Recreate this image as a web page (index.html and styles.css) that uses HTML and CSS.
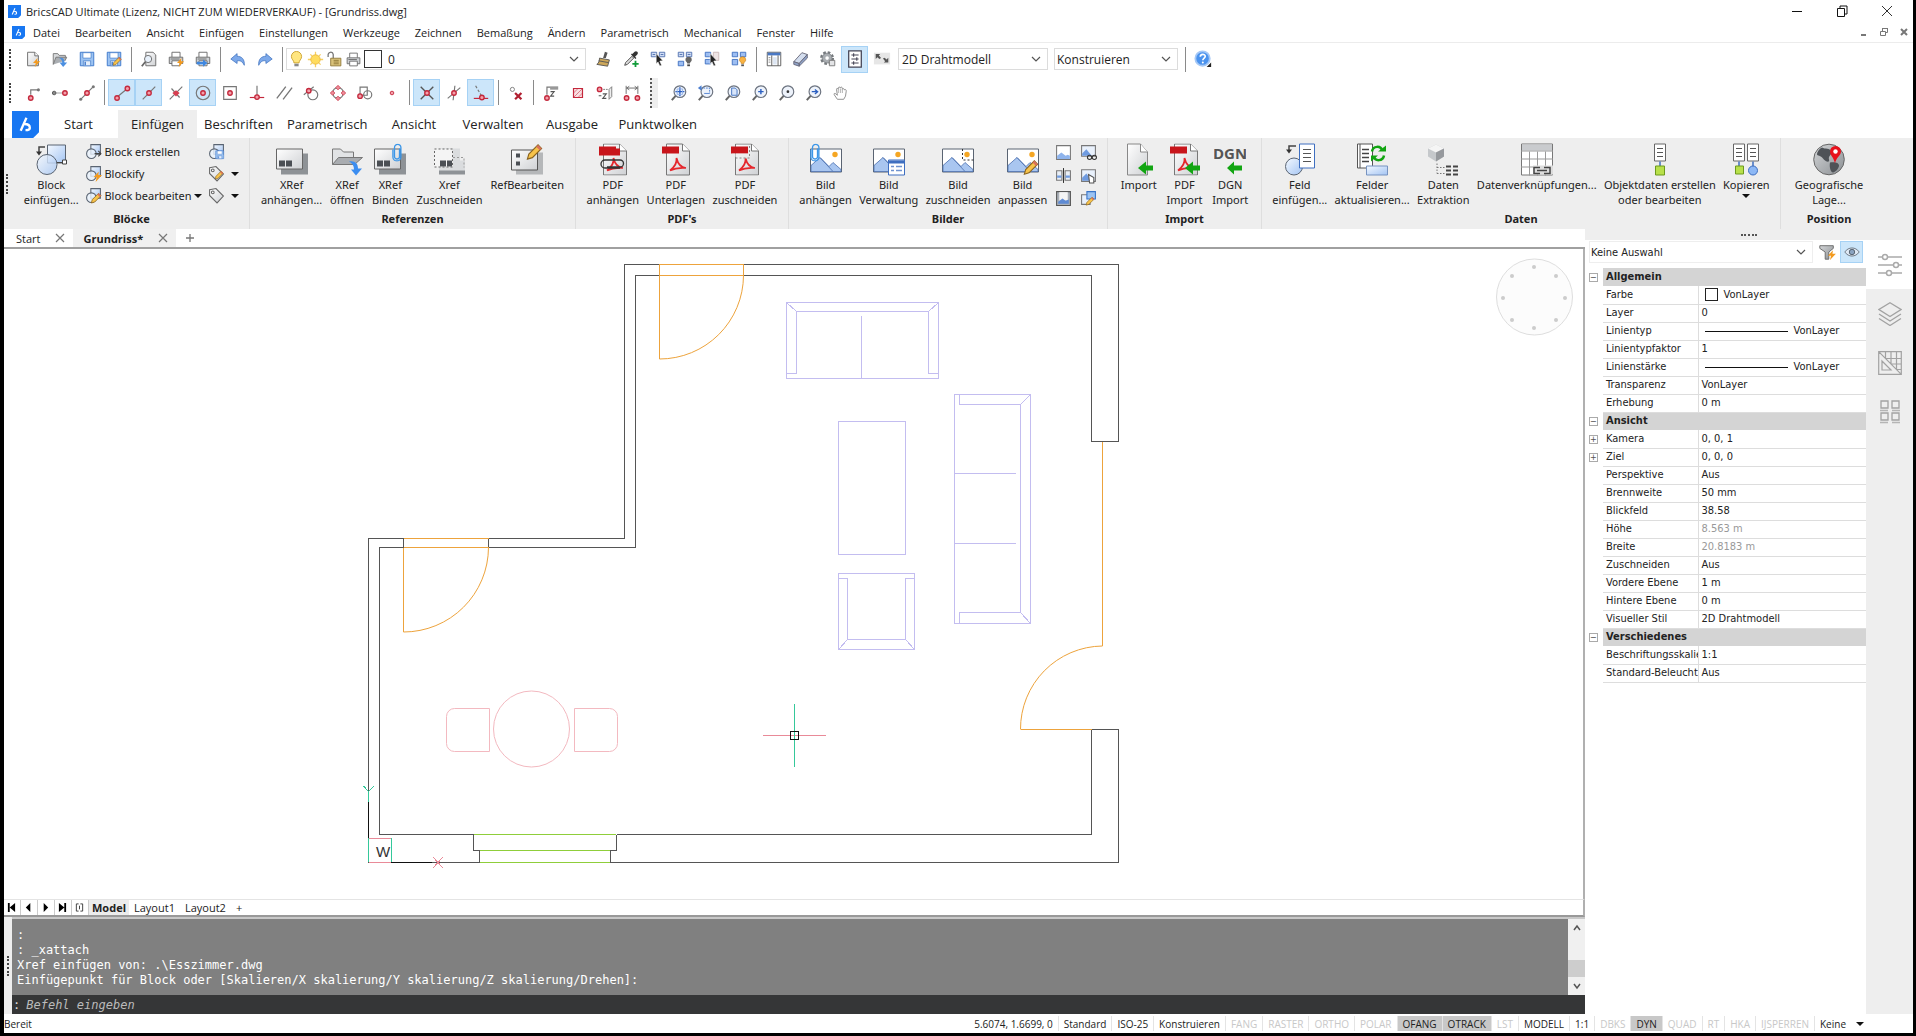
FILE: index.html
```html
<!DOCTYPE html>
<html lang="de">
<head>
  <meta charset="UTF-8" />
  <meta name="viewport" content="width=device-width, initial-scale=1.0"/>
  <title>BricsCAD Ultimate - [Grundriss.dwg]</title>
  <link rel="stylesheet" href="styles.css">
</head>
<body>

  <!-- Icons -->
  <svg class="sprite" aria-hidden="true">
    <defs>
      <linearGradient id="gBlue" x1="0" y1="0" x2="1" y2="1"><stop offset="0" stop-color="#f4f9ff"/><stop offset="1" stop-color="#a3c4f3"/></linearGradient>
      <linearGradient id="gGrey" x1="0" y1="0" x2="1" y2="1"><stop offset="0" stop-color="#ffffff"/><stop offset="1" stop-color="#cfd1d4"/></linearGradient>
      <linearGradient id="gDark" x1="0" y1="0" x2="1" y2="1"><stop offset="0" stop-color="#d4d6d8"/><stop offset="1" stop-color="#8b8f93"/></linearGradient>
    </defs>

    <symbol id="logo" viewBox="0 0 28 28"><path d="M0 0h28v22l-6 6H0z" fill="#1877f2"/><path d="M15 7L9 20.500M13 13.500c3.500 0 5.500 1.500 5.500 4 0 1.500-1.500 2.300-4.500 2.300" fill="none" stroke="#fff" stroke-width="2.400"/></symbol>
    <symbol id="pin" viewBox="0 0 20 20"><circle cx="10" cy="10" r="2.500" fill="#f3a0ab" stroke="#c4283c" stroke-width="1.500"/></symbol>
    <symbol id="pencil" viewBox="0 0 12 12"><path d="M1 11l1-3.500L8.500 1 11 3.500 4.500 10z" fill="#f7c34a" stroke="#8a6420" stroke-width=".8"/><path d="M8.500 1L11 3.500 9.700 4.800 7.200 2.300z" fill="#d9705c"/></symbol>
    <symbol id="clip" viewBox="0 0 10 18"><path d="M7.500 5v8a2.500 2.500 0 0 1-5 0V4a3.200 3.200 0 0 1 6.400 0v9.500a4 4 0 0 1-8 0V6" fill="none" stroke="#3b96e8" stroke-width="1.300"/></symbol>
    <symbol id="bolt" viewBox="0 0 8 10"><path d="M5 0L0 5.500h3L2 10l6-6.500H4.500z" fill="#f39a1e"/></symbol>

    <symbol id="new" viewBox="0 0 20 20"><path d="M4 2.500h8l4 4v11H4z" fill="url(#gGrey)" stroke="#666"/><path d="M12 2.500v4h4" fill="#fff" stroke="#666"/><use href="#bolt" x="10" y="9" width="8" height="10"/></symbol>
    <symbol id="open" viewBox="0 0 20 20"><path d="M2.500 16V4h5l1.500 2h7v3" fill="#d7d9db" stroke="#777"/><path d="M2.500 16l3-8h12l-2 4" fill="#aaaeb2" stroke="#777"/><path d="M9 9c4-1 6 1 6 5h3l-4.500 5-4-5h3c0-2-1-4-3.500-5z" fill="#4c8fe0"/></symbol>
    <symbol id="save" viewBox="0 0 20 20"><path d="M2.500 2.500h15v15h-15z" fill="#9cc3f2" stroke="#3874c8"/><path d="M5.500 3h9v6h-9z" fill="#fff" stroke="#3874c8" stroke-width=".7"/><path d="M6 12h8v5.500H6z" fill="#e6effb" stroke="#3874c8" stroke-width=".7"/><path d="M8 13v4" stroke="#3874c8" stroke-width="1.500"/></symbol>
    <symbol id="saveas" viewBox="0 0 20 20"><use href="#save"/><use href="#pencil" x="8" y="7" width="11" height="11"/></symbol>
    <symbol id="preview" viewBox="0 0 20 20"><path d="M6.500 2.500h8l3 3v12h-11z" fill="url(#gGrey)" stroke="#666"/><circle cx="9" cy="10" r="4" fill="#e8f1fb" stroke="#666"/><path d="M6 13l-4 5" stroke="#666" stroke-width="2"/></symbol>
    <symbol id="print" viewBox="0 0 20 20"><path d="M5.500 8V2.500h9V8" fill="#fff" stroke="#666"/><path d="M2.500 8h15v7h-15z" fill="#d0d3d6" stroke="#666"/><path d="M5.500 12h9v5.500h-9z" fill="#fff" stroke="#666"/><path d="M4 10h10" stroke="#666"/></symbol>
    <symbol id="printbolt" viewBox="0 0 20 20"><use href="#print"/><use href="#bolt" x="11" y="9" width="8" height="10"/></symbol>
    <symbol id="printgo" viewBox="0 0 20 20"><use href="#print"/><path d="M3 13h7v-2.500l5 4-5 4V16H3z" fill="#3f87e0"/></symbol>
    <symbol id="undo" viewBox="0 0 20 20"><path d="M9 4L2 10l7 5v-3c4-.5 6 1 8 5 .5-7-3-10-8-10z" fill="#7da9ea" stroke="#3c6fbd" stroke-width=".8"/></symbol>
    <symbol id="redo" viewBox="0 0 20 20"><path d="M11 4l7 6-7 5v-3c-4-.5-6 1-8 5-.5-7 3-10 8-10z" fill="#7da9ea" stroke="#3c6fbd" stroke-width=".8"/></symbol>
    <symbol id="bulb" viewBox="0 0 20 20"><path d="M7 14c0-3-3-4-3-7.500a6 6 0 0 1 12 0c0 3.500-3 4.500-3 7.500z" fill="#ffe680" stroke="#c79b22"/><path d="M7.500 15h5v3h-5z" fill="#888"/></symbol>
    <symbol id="sun" viewBox="0 0 20 20"><path d="M10 1v18M1 10h18M4 4l12 12M16 4L4 16" stroke="#f6cf62" stroke-width="1.500"/><circle cx="10" cy="10" r="5.500" fill="#ffdc5e" stroke="#eab73a"/></symbol>
    <symbol id="lock" viewBox="0 0 20 20"><path d="M2.500 7V5a3 3 0 0 1 6-1v5" fill="none" stroke="#777" stroke-width="1.500"/><path d="M5.500 8.500h12v9h-12z" fill="#d9c27a" stroke="#8c7434"/><path d="M9 11h6M9 13h6M9 15h6" stroke="#8c7434"/></symbol>
    <symbol id="brush" viewBox="0 0 20 20"><path d="M11 2l3 1-2 6h-3z" fill="#555"/><path d="M5 9l11 2-2 7-12-2c2-1 3-4 3-7z" fill="#cda75a" stroke="#555"/><path d="M4 12l11 2" stroke="#555"/></symbol>
    <symbol id="picker" viewBox="0 0 20 20"><path d="M3 17l1-3 7-7 2 2-7 7z" fill="#ddd" stroke="#444"/><path d="M10 5l5 5 1-1-1.500-1.500L17 5a2 2 0 0 0-3-3l-2.500 2.500L11 4z" fill="#333"/><path d="M15 12v7M11.500 15.500h7" stroke="#129c3a" stroke-width="2"/></symbol>
    <symbol id="cells" viewBox="0 0 20 20"><path d="M2.500 2.500h6v5h-6zM11.500 2.500h6v5h-6z" fill="#cfdcf5" stroke="#4f6fae"/><path d="M4 5h3M13 5h3" stroke="#4f6fae"/></symbol>
    <symbol id="arrow" viewBox="0 0 20 20"><path d="M8 4l7.500 8-3.500.3 2 4.700-2 .8-2-4.600-2 2.300z" fill="#222" stroke="#fff" stroke-width=".6"/></symbol>
    <symbol id="laysel" viewBox="0 0 20 20"><use href="#cells"/><use href="#arrow"/></symbol>
    <symbol id="layoff" viewBox="0 0 20 20"><use href="#cells"/><path d="M2.500 12.500h6v5h-6z" fill="#9dbef2" stroke="#3f6fc0"/><path d="M12.500 15c0-2-2-2-2-4a3.500 3.500 0 0 1 7 0c0 2-2 2-2 4z" fill="#666"/><path d="M12.500 16h3v2h-3z" fill="#444"/></symbol>
    <symbol id="layiso" viewBox="0 0 20 20"><path d="M2.500 2.500h6v5h-6zM2.500 10.500h6v5h-6z" fill="#9dbef2" stroke="#3f6fc0"/><path d="M11.500 2.500h6v9h-6z" fill="#eee4e4" stroke="#c9b5b5"/><use href="#arrow"/></symbol>
    <symbol id="layon" viewBox="0 0 20 20"><path d="M2.500 2.500h6v5h-6zM11.500 2.500h6v5h-6zM2.500 10.500h6v6h-6z" fill="#9dbef2" stroke="#3f6fc0"/><path d="M12.500 15c0-2-2-2-2-4a3.500 3.500 0 0 1 7 0c0 2-2 2-2 4z" fill="#f9b343" stroke="#b9771a" stroke-width=".6"/><path d="M12.500 16h3v2h-3z" fill="#555"/></symbol>
    <symbol id="explorer" viewBox="0 0 20 20"><path d="M2.500 2.500h15v15h-15z" fill="#fff" stroke="#555"/><path d="M3 3h14v3H3z" fill="#4a78c4"/><path d="M7.500 6v11.500M14.500 6v11.500" stroke="#555"/><path d="M9 8h4v8H9z" fill="#dde6f3"/><path d="M4 8.500h2M4 11h2M4 13.500h2" stroke="#888"/></symbol>
    <symbol id="eraser" viewBox="0 0 20 20"><path d="M2 13l9-10 6 2-9 10z" fill="#d3ddee" stroke="#667"/><path d="M2 13l6 2v3l-6-2zM8 15l9-10v4L8 18z" fill="#8fa3c8" stroke="#667"/></symbol>
    <symbol id="gear" viewBox="0 0 20 20"><circle cx="9" cy="9" r="6" fill="none" stroke="#75797d" stroke-width="3.500" stroke-dasharray="2.700 2"/><circle cx="9" cy="9" r="5.500" fill="#a9adb1" stroke="#75797d" stroke-width=".8"/><circle cx="9" cy="9" r="2" fill="#fff"/><path d="M11.500 11.500h6v6h-6z" fill="#e3e4e6" stroke="#777"/></symbol>
    <symbol id="sliders" viewBox="0 0 20 20"><path d="M3 1h14v18H3z" fill="#fff" stroke="#445" stroke-width="1.400"/><path d="M6 5.500h8M6 10h8M6 14.500h8M8.500 3.500v4M12 8v4M8.500 12.500v4" stroke="#445" stroke-width="1.200"/></symbol>
    <symbol id="viewdots" viewBox="0 0 20 20"><path d="M1 3h18v13H1z" fill="#e6e6e6"/><path d="M3 10V4.500h5L6.500 6 9 9 7 10 5 8zM17 8.500V14h-5l1.500-1.500-2.500-3L13 8.500l2 2z" fill="#555"/></symbol>
    <symbol id="help" viewBox="0 0 20 20"><circle cx="9.500" cy="9.500" r="8" fill="#4b93ee" stroke="#a5c8f6" stroke-width="2"/><path d="M7 7.500c0-3.500 5.500-3.500 5.500-.5 0 2-2.700 2-2.700 4.500" fill="none" stroke="#fff" stroke-width="1.800"/><circle cx="9.800" cy="14" r="1.100" fill="#fff"/><path d="M19 14v5h-5z" fill="#222"/></symbol>

    <!-- Objektfang -->
    <symbol id="s-from" viewBox="0 0 20 20"><path d="M7.500 12V6.500H16" fill="none" stroke="#777" stroke-width="1.300"/><use href="#pin" x="-2.500" y="5.500" width="20" height="20"/><circle cx="16" cy="6.500" r="1.700" fill="#777"/></symbol>
    <symbol id="s-mid2" viewBox="0 0 20 20"><path d="M4 10h12" stroke="#999"/><circle cx="3.500" cy="10" r="2" fill="#888" stroke="#555"/><use href="#pin" x="5.500"/></symbol>
    <symbol id="s-bet" viewBox="0 0 20 20"><path d="M3 17L17 3" stroke="#777" stroke-width="1.300"/><use href="#pin"/><circle cx="3" cy="17" r="1.700" fill="#777"/><circle cx="17" cy="3" r="1.700" fill="#777"/></symbol>
    <symbol id="s-end" viewBox="0 0 20 20"><path d="M4 15L16 5" stroke="#777" stroke-width="1.300"/><use href="#pin" x="-5.500" y="5.500"/><use href="#pin" x="6" y="-5"/></symbol>
    <symbol id="s-mid" viewBox="0 0 20 20"><path d="M3 17L17 3" stroke="#777" stroke-width="1.300"/><use href="#pin"/></symbol>
    <symbol id="s-near" viewBox="0 0 20 20"><path d="M3 17L17 3M5 5l9 10" stroke="#777" stroke-width="1.300"/><path d="M6 10l4-3 4 3-4 4z" fill="#d63e50"/></symbol>
    <symbol id="s-cen" viewBox="0 0 20 20"><circle cx="10" cy="10" r="7.500" fill="none" stroke="#777" stroke-width="1.300"/><use href="#pin"/></symbol>
    <symbol id="s-geo" viewBox="0 0 20 20"><path d="M3 3h14v14H3z" fill="none" stroke="#777" stroke-width="1.300"/><use href="#pin"/></symbol>
    <symbol id="s-perp" viewBox="0 0 20 20"><path d="M10 2v11" stroke="#777" stroke-width="1.300"/><path d="M2 15h16" stroke="#c4283c" stroke-width="1.300"/><use href="#pin" y="4.500"/></symbol>
    <symbol id="s-par" viewBox="0 0 20 20"><path d="M2 16L12 3M9 17L19 4" stroke="#777" stroke-width="1.500"/></symbol>
    <symbol id="s-tan" viewBox="0 0 20 20"><circle cx="12" cy="12" r="5.500" fill="none" stroke="#777" stroke-width="1.300"/><path d="M2 12L13 3" stroke="#777" stroke-width="1.300"/><use href="#pin" x="-2.500" y="-2.500"/></symbol>
    <symbol id="s-quad" viewBox="0 0 20 20"><circle cx="10" cy="10" r="6" fill="none" stroke="#777" stroke-width="1.300"/><path d="M10 1.500l2.500 2.500L10 6.500 7.500 4zM10 13.500l2.500 2.500-2.500 2.500L7.500 16zM4 7.500L6.500 10 4 12.500 1.500 10zM16 7.500l2.500 2.500-2.500 2.500-2.500-2.500z" fill="#ef8c99" stroke="#c4283c" stroke-width=".8"/></symbol>
    <symbol id="s-ins" viewBox="0 0 20 20"><path d="M4.500 3.500h8v9h-8z" fill="none" stroke="#777" stroke-width="1.300"/><circle cx="13" cy="12" r="4.500" fill="none" stroke="#777" stroke-width="1.300"/><use href="#pin" x="-5.500" y="3.500"/></symbol>
    <symbol id="s-node" viewBox="0 0 20 20"><circle cx="10" cy="10" r="2" fill="#f3a0ab" stroke="#c4283c"/></symbol>
    <symbol id="s-int" viewBox="0 0 20 20"><path d="M3 3l14 14M17 3L3 17" stroke="#555" stroke-width="1.500"/><use href="#pin"/></symbol>
    <symbol id="s-app" viewBox="0 0 20 20"><path d="M3 16L17 4M11 2L9 18" stroke="#777" stroke-width="1.300"/><use href="#pin"/></symbol>
    <symbol id="s-ext" viewBox="0 0 20 20"><path d="M4 2l7 12" stroke="#777" stroke-width="1.300" stroke-dasharray="3 2"/><path d="M2 16h16" stroke="#c4283c" stroke-width="1.300"/><use href="#pin" x="1" y="5"/></symbol>
    <symbol id="s-none" viewBox="0 0 20 20"><circle cx="6" cy="6" r="2.300" fill="none" stroke="#777"/><path d="M9 10l7 7M16 10l-7 7" stroke="#b01e30" stroke-width="2.500"/></symbol>
    <symbol id="s-z" viewBox="0 0 20 20"><path d="M5.500 12V3.500H18M9 5.500h9" fill="none" stroke="#777" stroke-width="1.300"/><path d="M9.500 8.500h4l-4 5h4" fill="none" stroke="#555" stroke-width="1.200"/><use href="#pin" x="-4.500" y="5.500"/></symbol>
    <symbol id="s-hatch" viewBox="0 0 20 20"><path d="M5 5h10v10H5z" fill="#f9dfe2" stroke="#c4283c" stroke-width="1.300"/><path d="M5 10l5-5M5 15L15 5M10 15l5-5" stroke="#c4283c" stroke-width=".6"/></symbol>
    <symbol id="s-negz" viewBox="0 0 20 20"><use href="#pin" x="-6" y="-4"/><path d="M8 6h5" stroke="#777" stroke-dasharray="2 1"/><path d="M14.500 6l3-3v11l-3 3z" fill="#eee" stroke="#777"/><path d="M3 13h3M7.500 11h4l-4 5h4" fill="none" stroke="#555" stroke-width="1.200"/></symbol>
    <symbol id="s-dist" viewBox="0 0 20 20"><path d="M3.500 2v9M16.500 2v9M4 4.500h12M7 2.500l-3 2 3 2M13 2.500l3 2-3 2" fill="none" stroke="#666"/><use href="#pin" x="-6" y="5.500"/><use href="#pin" x="6" y="5.500"/></symbol>
    <symbol id="lens" viewBox="0 0 20 20"><path d="M2 18l4.500-5" stroke="#666" stroke-width="2.200"/><circle cx="11" cy="8.500" r="6.500" fill="#eef3fb" stroke="#6d7480" stroke-width="1.300"/></symbol>
    <symbol id="z-ext" viewBox="0 0 20 20"><use href="#lens"/><path d="M11 3.500v10M6 8.500h10" stroke="#2c5fc0" stroke-width="1.500"/><path d="M8 5.500h6v6H8z" fill="none" stroke="#8fb0ea"/></symbol>
    <symbol id="z-prev" viewBox="0 0 20 20"><use href="#lens"/><path d="M4 4.500h10v6" fill="none" stroke="#4c7fd0" stroke-dasharray="2 1"/><path d="M14 10.500H8" fill="none" stroke="#4c7fd0"/><path d="M1 4.500L5 1.500v6z" fill="#4c7fd0"/></symbol>
    <symbol id="z-page" viewBox="0 0 20 20"><use href="#lens"/><path d="M8.500 4.500h4l2 2v6h-6z" fill="#d8e5fa" stroke="#3f6fc0"/></symbol>
    <symbol id="z-in" viewBox="0 0 20 20"><use href="#lens"/><path d="M11 5.500v6M8 8.500h6" stroke="#2c5fc0" stroke-width="1.600"/></symbol>
    <symbol id="z-dot" viewBox="0 0 20 20"><use href="#lens"/><circle cx="11" cy="8.500" r="1.500" fill="#333"/></symbol>
    <symbol id="z-right" viewBox="0 0 20 20"><use href="#lens"/><path d="M7.500 8.500h6M11 6l3 2.500-3 2.500" fill="none" stroke="#2c5fc0" stroke-width="1.500"/></symbol>
    <symbol id="hand" viewBox="0 0 20 20"><path d="M6 17l-3.500-5c-.8-1.500.7-2.200 1.800-1L6 12.500 5 6c0-1.500 1.500-1.500 2 0V4.500c.3-1.500 2-1.500 2.200 0 .3-1.400 2-1.400 2.300 0V6c.5-1.300 2.300-1 2.300.5 1-.8 2.200-.2 2 1.500l-.8 5.500-2 3.500z" fill="#fff" stroke="#888"/><path d="M7 6v4M9.300 5v5M11.500 6v4" stroke="#aaa"/></symbol>

    <!-- Multifunktionsleiste -->
    <symbol id="r-insert" viewBox="0 0 32 32"><path d="M12.500 1.500h18v18h-18z" fill="url(#gBlue)" stroke="#5a6472"/><circle cx="12" cy="21" r="10" fill="url(#gBlue)" stroke="#5a6472" fill-opacity=".8"/><path d="M10 3.500H4V9" fill="none" stroke="#444" stroke-width="1.500"/><path d="M1 8h6l-3 4z" fill="#333"/><path d="M27.500 16.500h4v4h-4z" fill="#fff" stroke="#444"/><path d="M22 19h5" stroke="#444"/></symbol>
    <symbol id="r-blk" viewBox="0 0 16 16"><path d="M5.500 1.500h9v9h-9z" fill="url(#gBlue)" stroke="#5a6472"/><circle cx="6" cy="10" r="4.500" fill="#eaf2fd" fill-opacity=".8" stroke="#5a6472"/></symbol>
    <symbol id="r-create" viewBox="0 0 16 16"><use href="#r-blk"/><path d="M9 10h6M12.500 7.500L15 10l-2.500 2.500" fill="none" stroke="#444"/></symbol>
    <symbol id="r-blockify" viewBox="0 0 16 16"><use href="#r-blk"/><use href="#bolt" x="8" y="6" width="8" height="10"/></symbol>
    <symbol id="r-edit" viewBox="0 0 16 16"><use href="#r-blk"/><use href="#pencil" x="5" y="5" width="11" height="11"/></symbol>
    <symbol id="r-blksave" viewBox="0 0 16 16"><use href="#r-blk"/><use href="#save" x="6" y="6" width="10" height="10"/></symbol>
    <symbol id="r-tag" viewBox="0 0 16 16"><path d="M1.500 2.500l6-1 7 7-6 6.500-7-7z" fill="url(#gGrey)" stroke="#666"/><circle cx="4.500" cy="5" r="1.300" fill="#fff" stroke="#666"/></symbol>
    <symbol id="r-tagedit" viewBox="0 0 16 16"><use href="#r-tag"/><use href="#pencil" x="6" y="5" width="9" height="9"/></symbol>
    <symbol id="r-sheet" viewBox="0 0 32 32"><path d="M5 10h27v21H5z" fill="#8e9296"/><path d="M.5 5.500h26v20H.5z" fill="url(#gGrey)" stroke="#666"/><path d="M3 17h6v6H3zM10 17h6v6h-6z" fill="#4b4f54"/></symbol>
    <symbol id="r-xopen" viewBox="0 0 32 32"><path d="M1.500 21V5.500h8l3 3h10V15" fill="#e1e3e5" stroke="#777"/><path d="M1.500 21l6-7h24l-8 7z" fill="#a9acb0" stroke="#777"/><path d="M18 18c6-1 9 2 9 7h4l-6 7-5-6h3c0-3-1-6-5-8z" fill="#3b8df0"/></symbol>
    <symbol id="r-xbind" viewBox="0 0 32 32"><use href="#r-sheet"/><use href="#clip" x="18" y="0" width="10" height="18"/></symbol>
    <symbol id="r-xclip" viewBox="0 0 32 32"><path d="M6 24h26v7H6z" fill="#8e9296"/><path d="M20 5h7v12h5v10H6V5z" fill="#dadcde" stroke="none"/><path d="M1.500 5.500h18v18h-18z" fill="#f4f4f4" stroke="#666" stroke-dasharray="2 2"/><path d="M20 14h11v10" fill="none" stroke="#999" stroke-dasharray="2 2"/><path d="M7 17h6v6H7zM14 17h5v6h-5z" fill="#4b4f54"/></symbol>
    <symbol id="r-refedit" viewBox="0 0 32 32"><path d="M5 9h27v22H5z" fill="#b5b7b9"/><path d="M.5 6.500h26v20H.5z" fill="url(#gGrey)" stroke="#555"/><path d="M5 10h4v4H5zM5 18h4v4H5z" fill="#4b4f54"/><use href="#pencil" x="15" y="0" width="17" height="17"/></symbol>
    <symbol id="r-pdf" viewBox="0 0 32 32"><path d="M6.500.5h16l7 7v24h-23z" fill="url(#gGrey)" stroke="#777"/><path d="M22.500.5v7h7" fill="#fff" stroke="#777"/><path d="M2 3h17v7H2z" fill="#c8151b"/><path d="M10 27c4-3 7-8 6.500-12.500C18 21 21 24 26 24.500c-6-.5-11 0-16 2.500z" fill="none" stroke="#e5262c" stroke-width="1.700"/></symbol>
    <symbol id="r-pdfattach" viewBox="0 0 32 32"><use href="#r-pdf"/><path d="M2 5h21v7H2z" fill="#c8151b"/><path d="M23 24.500H8a4 4 0 0 1 0-8h15a3.500 3.500 0 0 1 0 7H10" fill="none" stroke="#333" stroke-width="1.300"/></symbol>
    <symbol id="r-pdfclip" viewBox="0 0 32 32"><use href="#r-pdf"/><path d="M3 10h17v5H8z" fill="#eee" opacity=".6"/><path d="M6.500 14.500h14v-14" fill="none" stroke="#888" stroke-dasharray="2 2"/></symbol>
    <symbol id="r-img" viewBox="0 0 32 32"><path d="M.5 5.500h31v23H.5z" fill="#fff" stroke="#5a6472"/><path d="M1 22l9-8 9 9 4-4 8 7v2H1z" fill="#a9c6f0" stroke="#4a6fae" stroke-width=".8"/><path d="M10 14l13 14" stroke="#4a6fae" stroke-width=".8"/><circle cx="25" cy="11" r="2.700" fill="#f5a623"/></symbol>
    <symbol id="r-imgattach" viewBox="0 0 32 32"><use href="#r-img"/><use href="#clip" x="0" y="0" width="10" height="18"/></symbol>
    <symbol id="r-imgman" viewBox="0 0 32 32"><use href="#r-img"/><path d="M15.500 16.500h16v15h-16z" fill="#fff" stroke="#3f6fc0"/><path d="M16 17h15v3H16z" fill="#3f6fc0"/><path d="M18 23h3M23 23h6M18 27h3M23 27h6" stroke="#6f93d0" stroke-width="1.500"/></symbol>
    <symbol id="r-imgclip" viewBox="0 0 32 32"><use href="#r-img"/><path d="M20.500 5.500v11h11" fill="none" stroke="#333" stroke-dasharray="2 2"/></symbol>
    <symbol id="r-imgedit" viewBox="0 0 32 32"><use href="#r-img"/><use href="#pencil" x="16" y="16" width="16" height="16"/></symbol>
    <symbol id="r-i1" viewBox="0 0 16 16"><path d="M1.500 1.500h13v13h-13z" fill="#fff" stroke="#777"/><path d="M2 11l4-3 4 3 2-1 2 1v3H2z" fill="#8fb4ec"/></symbol>
    <symbol id="r-i2" viewBox="0 0 16 16"><path d="M1.500 1.500h13v10h-13z" fill="#e9f1fc" stroke="#777"/><path d="M2 9l4-4 5 6H2z" fill="#6f9be0"/><circle cx="9" cy="12.500" r="2" fill="none" stroke="#333"/><circle cx="13.500" cy="12.500" r="2" fill="none" stroke="#333"/></symbol>
    <symbol id="r-i3" viewBox="0 0 16 16"><path d="M1.500 3.500h5v9h-5zM9.500 3.500h5v9h-5z" fill="#e9eef5" stroke="#777"/><path d="M8 1v14" stroke="#333"/><path d="M2 8h4v2H2zM10 8h4v2h-4z" fill="#6f9be0"/></symbol>
    <symbol id="r-i4" viewBox="0 0 16 16"><path d="M1.500 2.500h13v11h-13z" fill="#e9f1fc" stroke="#777"/><path d="M2 10l4-4 5 7H2z" fill="#6f9be0"/><path d="M8 7l5 3v5H9z" fill="#fff" stroke="#555"/></symbol>
    <symbol id="r-i5" viewBox="0 0 16 16"><path d="M1.500 1.500h13v13h-13z" fill="#aab0b8" stroke="#555"/><path d="M4 2h8v8H4z" fill="#f4f4f4"/><path d="M3 11l4-3 3 2 3-1v4H3z" fill="#5f8bd4"/></symbol>
    <symbol id="r-i6" viewBox="0 0 16 16"><path d="M1.500 4.500h8v9h-8z" fill="#e9f1fc" stroke="#777"/><path d="M6.500 1.500h8v7h-8z" fill="#9cc3f2" stroke="#3874c8"/><use href="#pencil" x="5" y="6" width="9" height="9"/></symbol>
    <symbol id="r-import" viewBox="0 0 32 32"><path d="M4.500.5h13l7 8v23h-20z" fill="url(#gGrey)" stroke="#888"/><path d="M17.500.5v8h7" fill="#fff" stroke="#888"/><path d="M30 22v5h-7v4l-8-6.500 8-6.500v4z" fill="#12a512"/></symbol>
    <symbol id="r-pdfimport" viewBox="0 0 32 32"><use href="#r-pdf"/><path d="M32 22v5h-7v4l-8-6.500 8-6.500v4z" fill="#12a512"/></symbol>
    <symbol id="r-field" viewBox="0 0 32 32"><circle cx="10" cy="23" r="8.500" fill="url(#gBlue)" stroke="#5a6472"/><path d="M15.500.5h15v24h-15z" fill="#fff" stroke="#3f6fc0"/><path d="M19 6h8M19 10h8M19 14h8M19 18h8" stroke="#555"/><path d="M12 2.500H5V7" fill="none" stroke="#444" stroke-width="1.500"/><path d="M2 6h6l-3 4z" fill="#333"/></symbol>
    <symbol id="r-fieldup" viewBox="0 0 32 32"><path d="M1.500.5h15v24h-15z" fill="#fff" stroke="#555"/><path d="M4 .5v24" stroke="#555"/><path d="M6 6h7M6 10h7M6 14h7M6 18h7" stroke="#444" stroke-width="1.600"/><path d="M16 8c1-6 9-6 10-1M28 12c-1 6-9 6-10 1" fill="none" stroke="#12a512" stroke-width="2.500"/><path d="M22 8h8V2zM22 12h-7v6z" fill="#12a512"/><path d="M10.500 22.500h21v9h-21z" fill="url(#gBlue)" stroke="#7793c0"/></symbol>
    <symbol id="r-extract" viewBox="0 0 32 32"><path d="M9 1l8 4v8l-8 5-8-5V5z" fill="#c5c8cb"/><path d="M1 5l8-4 8 4-8 4z" fill="#f5f5f5"/><path d="M9 9l8-4v8l-8 5z" fill="#96999d"/><path d="M10 20v10M10 24h8M10 30h8" stroke="#777" stroke-dasharray="1.500 1.500"/><path d="M19 23h5M26 23h5M19 27h5M26 27h5M19 31h5M26 31h5" stroke="#444" stroke-width="2"/></symbol>
    <symbol id="r-links" viewBox="0 0 32 32"><path d="M.5.500h31v31H.5z" fill="#fff" stroke="#777"/><path d="M1 1h30v6H1z" fill="#c9cbce"/><path d="M0 7.500h32M0 15.500h32M0 23.500h32M8.500 8v24M16.500 8v24M24.500 8v24" stroke="#999"/><path d="M12 22h20v9H12z" fill="#ddd"/><path d="M19 24h-6v6h6M16 27h10M23 24h6v6h-6" fill="none" stroke="#444" stroke-width="1.500"/></symbol>
    <symbol id="r-objdata" viewBox="0 0 32 32"><path d="M10.500.5h11v17h-11z" fill="#fff" stroke="#666"/><path d="M13 5h6M13 9h6M13 13h6" stroke="#555"/><path d="M16 18v5" stroke="#3f6fc0" stroke-width="1.500"/><path d="M11.500 22.500h9v9h-9z" fill="#b8e04a" stroke="#6d9a1c"/></symbol>
    <symbol id="r-copy" viewBox="0 0 32 32"><path d="M3.500.5h11v17h-11zM17.500.5h11v17h-11z" fill="#fff" stroke="#666"/><path d="M6 5h6M6 9h6M6 13h6M20 5h6M20 9h6M20 13h6" stroke="#555"/><path d="M9 18v5M23 18v5" stroke="#3f6fc0" stroke-width="1.500"/><path d="M5.500 22.500h8v8h-8z" fill="#b8e04a" stroke="#6d9a1c"/><circle cx="23" cy="27" r="4.500" fill="#8db8f5" stroke="#3f6fc0"/></symbol>
    <symbol id="r-geo" viewBox="0 0 32 32"><circle cx="16" cy="16" r="15.300" fill="url(#gDark)" stroke="#666"/><path d="M9 4c3 2 8 0 9 4s-3 4-2 8-4 2-6-1-6-3-6-4 1-5 5-7zM17 19c4-1 9 0 9 3s-4 7-6 7-4-5-3-10z" fill="#4e5257"/><path d="M22 20c-1-6-5-8-5-12a5.500 5.500 0 0 1 11 0c0 4-5 6-6 12z" fill="#e8101c"/><circle cx="22.500" cy="8" r="2.200" fill="#fff"/></symbol>

    <symbol id="funnel" viewBox="0 0 20 20"><path d="M2 3h15v3l-5 4v8H8v-8L2 6z" fill="url(#gDark)" stroke="#666"/><use href="#bolt" x="11" y="8" width="9" height="11"/></symbol>
    <symbol id="eye" viewBox="0 0 20 20"><path d="M2 10c4-6 12-6 16 0-4 6-12 6-16 0z" fill="#dfe9f5" stroke="#66707c"/><circle cx="10" cy="10" r="3" fill="#8aa3c0" stroke="#4f5b68"/></symbol>
    <symbol id="p-props" viewBox="0 0 24 24"><path d="M0 4h24M0 12h24M0 20h24" stroke="#aaa" stroke-width="1.500"/><circle cx="7" cy="4" r="2.500" fill="#fff" stroke="#aaa" stroke-width="1.500"/><circle cx="18" cy="12" r="2.500" fill="#fff" stroke="#aaa" stroke-width="1.500"/><circle cx="11" cy="20" r="2.500" fill="#fff" stroke="#aaa" stroke-width="1.500"/></symbol>
    <symbol id="p-layers" viewBox="0 0 24 24"><path d="M12 .8L23 7.500l-11 7-11-7zM1 12l11 7 11-7M1 16.500l11 7 11-7" fill="none" stroke="#a2a2a2" stroke-width="1.300"/></symbol>
    <symbol id="p-hatch" viewBox="0 0 24 24"><path d="M.7.700h22.600v22.600H.7zM.7.700l22.600 22.600M4 10v9h9zM7.500 1v6.500H23M13 1v12h10M18.500 1v17.500H23" fill="none" stroke="#a2a2a2" stroke-width="1.200"/></symbol>
    <symbol id="p-blocks" viewBox="0 0 24 24"><path d="M3 1h7v7H3zM14 1h7v7h-7zM3 13h7v7H3zM14 13h7v7h-7z" fill="none" stroke="#a2a2a2" stroke-width="1.300"/><path d="M2 10.500h8M14 10.500h8M2 22.500h8M14 22.500h8" stroke="#b5b5b5" stroke-width="1.500"/></symbol>
    <symbol id="chev" viewBox="0 0 10 10"><path d="M1 3l4 4 4-4" fill="none" stroke="#555" stroke-width="1.200"/></symbol>
    <symbol id="x" viewBox="0 0 10 10"><path d="M1 1l8 8M9 1L1 9" fill="none" stroke="currentColor" stroke-width="1.200"/></symbol>
    <symbol id="plus" viewBox="0 0 10 10"><path d="M5 1v8M1 5h8" stroke="currentColor" stroke-width="1.300"/></symbol>
    <symbol id="caret" viewBox="0 0 8 8"><path d="M0 2h8L4 6z" fill="#111"/></symbol>
  </svg>

  <header class="titlebar">
    <svg class="app-icon"><use href="#logo"/></svg>
    <span>BricsCAD Ultimate (Lizenz, NICHT ZUM WIEDERVERKAUF) - [Grundriss.dwg]</span>
    <div class="window-buttons">
      <button aria-label="Minimieren"><svg viewBox="0 0 12 12"><path d="M1 6.500h10" stroke="#111"/></svg></button>
      <button aria-label="Wiederherstellen"><svg viewBox="0 0 12 12"><path d="M1.500 3.500h7v8h-7zM4 3V1h7v8H9" fill="none" stroke="#111"/></svg></button>
      <button aria-label="Schließen"><svg viewBox="0 0 12 12"><path d="M1 1l10 10M11 1L1 11" stroke="#333"/></svg></button>
    </div>
  </header>

  <nav class="menubar">
    <svg class="app-icon"><use href="#logo"/></svg>
    <button>Datei</button>
    <button>Bearbeiten</button>
    <button>Ansicht</button>
    <button>Einfügen</button>
    <button>Einstellungen</button>
    <button>Werkzeuge</button>
    <button>Zeichnen</button>
    <button>Bemaßung</button>
    <button>Ändern</button>
    <button>Parametrisch</button>
    <button>Mechanical</button>
    <button>Fenster</button>
    <button>Hilfe</button>
    <div class="mdi-buttons">
      <button aria-label="Zeichnung minimieren"><svg viewBox="0 0 10 10"><path d="M2 8h5" stroke="#777" stroke-width="2"/></svg></button>
      <button aria-label="Zeichnung wiederherstellen"><svg viewBox="0 0 10 10"><path d="M1.500 4.500h5v4h-5zM3.500 4V1.500h5v4H7M3 1.500h6" fill="none" stroke="#777"/></svg></button>
      <button aria-label="Zeichnung schließen"><svg viewBox="0 0 10 10"><path d="M2 2l6 6M8 2L2 8" stroke="#777" stroke-width="2"/></svg></button>
    </div>
  </nav>

  <div class="toolbar toolbar-main">
    <span class="grip"></span>
    <button aria-label="Neu"><svg><use href="#new"/></svg></button>
    <button aria-label="Öffnen"><svg><use href="#open"/></svg></button>
    <button aria-label="Speichern"><svg><use href="#save"/></svg></button>
    <button aria-label="Speichern unter"><svg><use href="#saveas"/></svg></button>
    <span class="sep"></span>
    <button aria-label="Vorschau"><svg><use href="#preview"/></svg></button>
    <button aria-label="Drucken"><svg><use href="#printbolt"/></svg></button>
    <button aria-label="Publizieren"><svg><use href="#printgo"/></svg></button>
    <span class="sep"></span>
    <button aria-label="Zurück"><svg><use href="#undo"/></svg></button>
    <button aria-label="Wiederholen"><svg><use href="#redo"/></svg></button>
    <span class="sep"></span>
    <div class="combo layer-combo">
      <svg><use href="#bulb"/></svg>
      <svg><use href="#sun"/></svg>
      <svg><use href="#lock"/></svg>
      <svg><use href="#print"/></svg>
      <span class="swatch"></span>
      <select aria-label="Layer"><option>0</option></select>
      <svg class="chev"><use href="#chev"/></svg>
    </div>
    <button aria-label="Eigenschaften anpassen"><svg><use href="#brush"/></svg></button>
    <button aria-label="Eigenschaften aufnehmen"><svg><use href="#picker"/></svg></button>
    <button aria-label="Layer setzen"><svg><use href="#laysel"/></svg></button>
    <button aria-label="Layer aus"><svg><use href="#layoff"/></svg></button>
    <button aria-label="Layer isolieren"><svg><use href="#layiso"/></svg></button>
    <button aria-label="Layer ein"><svg><use href="#layon"/></svg></button>
    <span class="sep"></span>
    <button aria-label="Explorer"><svg><use href="#explorer"/></svg></button>
    <button aria-label="Bereinigen"><svg><use href="#eraser"/></svg></button>
    <button aria-label="Einstellungen"><svg><use href="#gear"/></svg></button>
    <button class="on" aria-label="Eigenschaften"><svg><use href="#sliders"/></svg></button>
    <button aria-label="Ansichten"><svg><use href="#viewdots"/></svg></button>
    <div class="combo style-combo">
      <select aria-label="Visueller Stil"><option>2D Drahtmodell</option></select>
      <svg class="chev"><use href="#chev"/></svg>
    </div>
    <div class="combo space-combo">
      <select aria-label="Arbeitsbereich"><option>Konstruieren</option></select>
      <svg class="chev"><use href="#chev"/></svg>
    </div>
    <span class="sep"></span>
    <button aria-label="Hilfe"><svg><use href="#help"/></svg></button>
  </div>

  <div class="toolbar">
    <span class="grip"></span>
    <button aria-label="Von"><svg><use href="#s-from"/></svg></button>
    <button aria-label="Mitte zwischen"><svg><use href="#s-mid2"/></svg></button>
    <button aria-label="Zwischen zwei Punkten"><svg><use href="#s-bet"/></svg></button>
    <span class="sep"></span>
    <button class="on" aria-label="Endpunkt"><svg><use href="#s-end"/></svg></button>
    <button class="on" aria-label="Mittelpunkt"><svg><use href="#s-mid"/></svg></button>
    <button aria-label="Nächster"><svg><use href="#s-near"/></svg></button>
    <button class="on" aria-label="Zentrum"><svg><use href="#s-cen"/></svg></button>
    <button aria-label="Geometrisches Zentrum"><svg><use href="#s-geo"/></svg></button>
    <button aria-label="Lot"><svg><use href="#s-perp"/></svg></button>
    <button aria-label="Parallel"><svg><use href="#s-par"/></svg></button>
    <button aria-label="Tangente"><svg><use href="#s-tan"/></svg></button>
    <button aria-label="Quadrant"><svg><use href="#s-quad"/></svg></button>
    <button aria-label="Basispunkt"><svg><use href="#s-ins"/></svg></button>
    <button aria-label="Punkt"><svg><use href="#s-node"/></svg></button>
    <span class="sep"></span>
    <button class="on" aria-label="Schnittpunkt"><svg><use href="#s-int"/></svg></button>
    <button aria-label="Angenommener Schnittpunkt"><svg><use href="#s-app"/></svg></button>
    <button class="on" aria-label="Verlängerung"><svg><use href="#s-ext"/></svg></button>
    <span class="sep"></span>
    <button aria-label="Fang löschen"><svg><use href="#s-none"/></svg></button>
    <span class="sep"></span>
    <button aria-label="Z ersetzen"><svg><use href="#s-z"/></svg></button>
    <button aria-label="Schraffur fangen"><svg><use href="#s-hatch"/></svg></button>
    <button aria-label="Negatives Z"><svg><use href="#s-negz"/></svg></button>
    <button aria-label="Abstand"><svg><use href="#s-dist"/></svg></button>
    <span class="grip grip-mid"></span>
    <button aria-label="Zoom Grenzen"><svg><use href="#z-ext"/></svg></button>
    <button aria-label="Zoom Vorher"><svg><use href="#z-prev"/></svg></button>
    <button aria-label="Zoom Fenster"><svg><use href="#z-page"/></svg></button>
    <button aria-label="Zoom rein"><svg><use href="#z-in"/></svg></button>
    <button aria-label="Zoom Zentrum"><svg><use href="#z-dot"/></svg></button>
    <button aria-label="Zoom rechts"><svg><use href="#z-right"/></svg></button>
    <button aria-label="Pan"><svg><use href="#hand"/></svg></button>
  </div>

  <nav class="ribbon-tabs">
    <button class="logo-button" aria-label="BricsCAD"><svg><use href="#logo"/></svg></button>
    <button>Start</button>
    <button class="active">Einfügen</button>
    <button>Beschriften</button>
    <button>Parametrisch</button>
    <button>Ansicht</button>
    <button>Verwalten</button>
    <button>Ausgabe</button>
    <button>Punktwolken</button>
  </nav>

  <div class="ribbon">
    <span class="grip"></span>
    <section class="panel panel-blocks">
      <div class="tools">
        <button class="big"><svg><use href="#r-insert"/></svg>Block<br>einfügen...</button>
        <div class="stack">
          <button><svg><use href="#r-create"/></svg>Block erstellen</button>
          <button><svg><use href="#r-blockify"/></svg>Blockify</button>
          <button><svg><use href="#r-edit"/></svg>Block bearbeiten<svg class="caret"><use href="#caret"/></svg></button>
        </div>
        <div class="stack stack-right">
          <button aria-label="Block speichern"><svg><use href="#r-blksave"/></svg></button>
          <button aria-label="Attribute bearbeiten"><svg><use href="#r-tagedit"/></svg><svg class="caret"><use href="#caret"/></svg></button>
          <button aria-label="Attribute"><svg><use href="#r-tag"/></svg><svg class="caret"><use href="#caret"/></svg></button>
        </div>
      </div>
      <h2>Blöcke</h2>
    </section>
    <section class="panel panel-refs">
      <div class="tools">
        <button class="big"><svg><use href="#r-sheet"/></svg>XRef<br>anhängen...</button>
        <button class="big"><svg><use href="#r-xopen"/></svg>XRef<br>öffnen</button>
        <button class="big"><svg><use href="#r-xbind"/></svg>XRef<br>Binden</button>
        <button class="big"><svg><use href="#r-xclip"/></svg>Xref<br>Zuschneiden</button>
        <button class="big"><svg><use href="#r-refedit"/></svg>RefBearbeiten</button>
      </div>
      <h2>Referenzen</h2>
    </section>
    <section class="panel panel-pdf">
      <div class="tools">
        <button class="big"><svg><use href="#r-pdfattach"/></svg>PDF<br>anhängen</button>
        <button class="big"><svg><use href="#r-pdf"/></svg>PDF<br>Unterlagen</button>
        <button class="big"><svg><use href="#r-pdfclip"/></svg>PDF<br>zuschneiden</button>
      </div>
      <h2>PDF's</h2>
    </section>
    <section class="panel panel-images">
      <div class="tools">
        <button class="big"><svg><use href="#r-imgattach"/></svg>Bild<br>anhängen</button>
        <button class="big"><svg><use href="#r-imgman"/></svg>Bild<br>Verwaltung</button>
        <button class="big"><svg><use href="#r-imgclip"/></svg>Bild<br>zuschneiden</button>
        <button class="big"><svg><use href="#r-imgedit"/></svg>Bild<br>anpassen</button>
        <div class="icon-grid">
          <button aria-label="Rahmen"><svg><use href="#r-i1"/></svg></button>
          <button aria-label="Transparenz"><svg><use href="#r-i2"/></svg></button>
          <button aria-label="Spiegeln"><svg><use href="#r-i3"/></svg></button>
          <button aria-label="Verschieben"><svg><use href="#r-i4"/></svg></button>
          <button aria-label="Qualität"><svg><use href="#r-i5"/></svg></button>
          <button aria-label="Bild speichern"><svg><use href="#r-i6"/></svg></button>
        </div>
      </div>
      <h2>Bilder</h2>
    </section>
    <section class="panel panel-import">
      <div class="tools">
        <button class="big"><svg><use href="#r-import"/></svg>Import</button>
        <button class="big"><svg><use href="#r-pdfimport"/></svg>PDF<br>Import</button>
        <button class="big"><svg viewBox="0 0 32 32"><text x="16" y="15" text-anchor="middle" class="dgn-text">DGN</text><path d="M28 22v5h-8v4l-7-6.500 7-6.500v4z" fill="#12a512"/></svg>DGN<br>Import</button>
      </div>
      <h2>Import</h2>
    </section>
    <section class="panel panel-data">
      <div class="tools">
        <button class="big"><svg><use href="#r-field"/></svg>Feld<br>einfügen...</button>
        <button class="big"><svg><use href="#r-fieldup"/></svg>Felder<br>aktualisieren...</button>
        <button class="big"><svg><use href="#r-extract"/></svg>Daten<br>Extraktion</button>
        <button class="big"><svg><use href="#r-links"/></svg>Datenverknüpfungen...</button>
        <button class="big"><svg><use href="#r-objdata"/></svg>Objektdaten erstellen<br>oder bearbeiten</button>
        <button class="big"><svg><use href="#r-copy"/></svg>Kopieren<br><svg class="caret"><use href="#caret"/></svg></button>
      </div>
      <h2>Daten</h2>
    </section>
    <section class="panel panel-geo">
      <div class="tools">
        <button class="big"><svg><use href="#r-geo"/></svg>Geografische<br>Lage...</button>
      </div>
      <h2>Position</h2>
    </section>
  </div>

  <div class="workspace">
    <main>
      <div class="doc-tabs">
        <div class="doc-tab"><button>Start</button><button aria-label="Start schließen"><svg><use href="#x"/></svg></button></div>
        <div class="doc-tab active"><button>Grundriss*</button><button aria-label="Grundriss schließen"><svg><use href="#x"/></svg></button></div>
        <button class="add" aria-label="Neue Zeichnung"><svg><use href="#plus"/></svg></button>
      </div>

      <div class="canvas">
        <svg class="drawing" role="img" aria-label="Grundriss">
          <g transform="translate(-4 -249)">
            <!-- Wände -->
            <g class="wall">
              <path d="M403.500 538.500H368.500V862.500H479.500V850.500H473.500V834.500H379.500V547.500H403.500V538.500"/>
              <path d="M488.500 547.500V538.500H624.500V264.500H659.500M488.500 547.500H635.500V275.500H659.500"/>
              <path d="M743.500 264.500H1118.500V441.500H1091.500V275.500H743.500"/>
              <path d="M616.500 834.500H1091.500V729.500H1118.500V862.500H610.500V850.500H616.500V834.500"/>
            </g>
            <g class="door">
              <path d="M659.500 359V264.500H743.500V275.500H659.500"/>
              <path class="smooth" d="M743.500 275.500A84 84 0 0 1 659.500 359"/>
              <path d="M403.500 538.500H488.500M403.500 547.500H488.500M403.500 547.500V632"/>
              <path class="smooth" d="M488.500 547.500A85 85 0 0 1 403.500 632"/>
              <path d="M1102.500 441.500V646M1091.500 729.500H1020.500"/>
              <path class="smooth" d="M1102.500 646A83 83 0 0 0 1020.500 729.500"/>
            </g>
            <path class="window" d="M474 834.500H616M480 850.500H610M480 862.500H610"/>
            <!-- Sofas, Sessel, Couchtisch -->
            <g class="furniture">
              <path d="M786.500 302.500H938.500V378.500H786.500zM796.500 373.500V311.500H928.500V373.500M786.500 373.500H796.500M928.500 373.500H938.500M861.500 316V378M786.500 302.500L796.500 311.500M938.500 302.500L928.500 311.500"/>
              <path d="M838.500 421.500H905.500V554.500H838.500z"/>
              <path d="M954.500 394.500H1030.500V623.500H954.500zM959.500 394.500V404.500H1020.500V612.500H959.500V623.500M954.500 473.500H1016M954.500 543.500H1016M1030.500 394.500L1020.500 404.500M1030.500 623.500L1020.500 612.500"/>
              <path d="M838.500 573.500H914.500V649.500H838.500zM838.500 578.500H847.500V639.500H905.500V578.500H914.500M838.500 649.500L847.500 639.500M914.500 649.500L905.500 639.500"/>
            </g>
            <!-- Esstisch -->
            <g class="dining">
              <circle cx="531.500" cy="729" r="38"/>
              <path d="M489.500 708.500H454.500a8 8 0 0 0-8 8V743.500a8 8 0 0 0 8 8H489.500zM574.500 708.500H609.500a8 8 0 0 1 8 8V743.500a8 8 0 0 1-8 8H574.500z"/>
            </g>
            <!-- BKS-Symbol -->
            <path class="axis-x" d="M369 838.500H391.500M369 862.500H391.500M433 857l10 11M443 857l-10 11"/>
            <path class="axis-y" d="M368.500 838V862M391.500 838V862M368.500 791V802M363.500 786L368.500 791.500 374 786"/>
            <path class="axis-line" d="M391 862.500H432M368.500 802V838"/>
            <text class="ucs" x="376" y="857">W</text>
            <!-- Fadenkreuz -->
            <path class="axis-x" d="M763 735.500H826"/>
            <path class="axis-y" d="M794.500 704V767"/>
            <path class="pickbox" d="M790.500 731.500H798.500V739.500H790.500z"/>
            <!-- LookFrom -->
            <circle class="look" cx="1534.500" cy="297" r="38"/>
            <g class="look-dots">
              <circle cx="1534" cy="267" r="2"/><circle cx="1556" cy="276" r="2"/><circle cx="1565" cy="298" r="2"/><circle cx="1556" cy="320" r="2"/>
              <circle cx="1534" cy="328" r="2"/><circle cx="1512" cy="320" r="2"/><circle cx="1503" cy="298" r="2"/><circle cx="1512" cy="276" r="2"/>
            </g>
          </g>
        </svg>
      </div>

      <div class="layout-tabs">
        <button class="nav" aria-label="Erstes"><svg viewBox="0 0 10 10"><path d="M1 0h2v10H1zM9 0v10L3 5z"/></svg></button>
        <button class="nav" aria-label="Vorheriges"><svg viewBox="0 0 10 10"><path d="M7 0v10L2 5z"/></svg></button>
        <button class="nav" aria-label="Nächstes"><svg viewBox="0 0 10 10"><path d="M3 0v10l5-5z"/></svg></button>
        <button class="nav" aria-label="Letztes"><svg viewBox="0 0 10 10"><path d="M7 0h2v10H7zM1 0v10l6-5z"/></svg></button>
        <button class="nav" aria-label="Liste"><svg viewBox="0 0 10 10"><path d="M4 1H1.500v8H4M6 1h2.500v8H6M5 3v4" fill="none" stroke="#333"/></svg></button>
        <button class="active">Model</button>
        <button>Layout1</button>
        <button>Layout2</button>
        <button aria-label="Layout hinzufügen">+</button>
      </div>

      <div class="command">
        <div class="command-side"><span class="grip"></span></div>
        <div class="command-body">
          <div class="history">
            <pre>:
: _xattach
Xref einfügen von: .\Esszimmer.dwg
Einfügepunkt für Block oder [Skalieren/X skalierung/Y skalierung/Z skalierung/Drehen]:</pre>
            <div class="scrollbar">
              <svg viewBox="0 0 10 10"><path d="M2 7l3-4 3 4" fill="none" stroke="#555" stroke-width="1.500"/></svg>
              <span class="thumb"></span>
              <svg viewBox="0 0 10 10"><path d="M2 3l3 4 3-4" fill="none" stroke="#555" stroke-width="1.500"/></svg>
            </div>
          </div>
          <div class="prompt">
            <label for="befehl">:</label>
            <input type="text" id="befehl" placeholder="Befehl eingeben" />
          </div>
        </div>
      </div>
    </main>

    <aside>
      <div class="aside-top"></div>
      <div class="aside-body">
        <div class="properties">
          <div class="selection">
            <div class="combo">
              <select aria-label="Auswahl"><option>Keine Auswahl</option></select>
              <svg class="chev"><use href="#chev"/></svg>
            </div>
            <button aria-label="Schnellauswahl"><svg><use href="#funnel"/></svg></button>
            <button class="on" aria-label="Anzeigen"><svg><use href="#eye"/></svg></button>
          </div>
          <table>
            <colgroup>
              <col class="col-toggle">
              <col class="col-name">
              <col>
            </colgroup>
            <tbody>
              <tr class="group"><td><button aria-label="Allgemein zuklappen">−</button></td><th colspan="2">Allgemein</th></tr>
              <tr><td></td><th>Farbe</th><td><span class="color-box"></span>VonLayer</td></tr>
              <tr><td></td><th>Layer</th><td>0</td></tr>
              <tr><td></td><th>Linientyp</th><td><span class="line"></span>VonLayer</td></tr>
              <tr><td></td><th>Linientypfaktor</th><td>1</td></tr>
              <tr><td></td><th>Linienstärke</th><td><span class="line"></span>VonLayer</td></tr>
              <tr><td></td><th>Transparenz</th><td>VonLayer</td></tr>
              <tr><td></td><th>Erhebung</th><td>0 m</td></tr>
            </tbody>
            <tbody>
              <tr class="group"><td><button aria-label="Ansicht zuklappen">−</button></td><th colspan="2">Ansicht</th></tr>
              <tr><td><button aria-label="Kamera aufklappen">+</button></td><th>Kamera</th><td>0, 0, 1</td></tr>
              <tr><td><button aria-label="Ziel aufklappen">+</button></td><th>Ziel</th><td>0, 0, 0</td></tr>
              <tr><td></td><th>Perspektive</th><td>Aus</td></tr>
              <tr><td></td><th>Brennweite</th><td>50 mm</td></tr>
              <tr><td></td><th>Blickfeld</th><td>38.58</td></tr>
              <tr><td></td><th>Höhe</th><td class="locked">8.563 m</td></tr>
              <tr><td></td><th>Breite</th><td class="locked">20.8183 m</td></tr>
              <tr><td></td><th>Zuschneiden</th><td>Aus</td></tr>
              <tr><td></td><th>Vordere Ebene</th><td>1 m</td></tr>
              <tr><td></td><th>Hintere Ebene</th><td>0 m</td></tr>
              <tr><td></td><th>Visueller Stil</th><td>2D Drahtmodell</td></tr>
            </tbody>
            <tbody>
              <tr class="group"><td><button aria-label="Verschiedenes zuklappen">−</button></td><th colspan="2">Verschiedenes</th></tr>
              <tr><td></td><th>Beschriftungsskalie</th><td>1:1</td></tr>
              <tr><td></td><th>Standard-Beleuchti</th><td>Aus</td></tr>
            </tbody>
          </table>
        </div>
        <div class="side-tabs">
          <button class="active" aria-label="Eigenschaften"><svg><use href="#p-props"/></svg></button>
          <button aria-label="Layer"><svg><use href="#p-layers"/></svg></button>
          <button aria-label="Schraffuren"><svg><use href="#p-hatch"/></svg></button>
          <button aria-label="Blöcke"><svg><use href="#p-blocks"/></svg></button>
        </div>
      </div>
    </aside>
  </div>

  <footer class="statusbar">
    <span class="ready">Bereit</span>
    <span class="coords">5.6074, 1.6699, 0</span>
    <button>Standard</button>
    <button>ISO-25</button>
    <button>Konstruieren</button>
    <button class="off">FANG</button>
    <button class="off">RASTER</button>
    <button class="off">ORTHO</button>
    <button class="off">POLAR</button>
    <button class="pressed">OFANG</button>
    <button class="pressed">OTRACK</button>
    <button class="off">LST</button>
    <button>MODELL</button>
    <button>1:1</button>
    <button class="off">DBKS</button>
    <button class="pressed">DYN</button>
    <button class="off">QUAD</button>
    <button class="off">RT</button>
    <button class="off">HKA</button>
    <button class="off">IJSPERREN</button>
    <button>Keine</button>
    <button class="more" aria-label="Mehr"><svg class="caret"><use href="#caret"/></svg></button>
  </footer>

</body>
</html>
```

FILE: styles.css
```css
* {
  box-sizing: border-box;
}

body {
  display: flex;
  flex-direction: column;
  height: 100vh;
  margin: 0;
  padding: 0 3px 3px 4px;
  overflow: hidden;
  background: #000;
  color: #222;
  font-family: "Open Sans", "Noto Sans", sans-serif;
  font-size: 11px;
}

button {
  display: flex;
  align-items: center;
  padding: 0;
  border: 0;
  background: none;
  color: inherit;
  font: inherit;
  cursor: pointer;
}

select {
  flex: 1;
  min-width: 0;
  padding: 0;
  border: 0;
  background: none;
  color: inherit;
  font: inherit;
  appearance: none;
}

svg {
  display: block;
  flex: none;
}

.sprite {
  position: absolute;
  width: 0;
  height: 0;
}

.caret {
  width: 8px;
  height: 8px;
}

.chev {
  width: 10px;
  height: 10px;
}

/* Titel und Menü */
.titlebar {
  display: flex;
  align-items: center;
  gap: 5px;
  height: 22px;
  padding-left: 4px;
  background: #fff;
}

.app-icon {
  width: 13px;
  height: 13px;
}

.window-buttons {
  display: flex;
  gap: 33px;
  margin-left: auto;
  padding-right: 20px;
}

.window-buttons svg {
  width: 12px;
  height: 12px;
}

.menubar {
  display: flex;
  align-items: center;
  gap: 15px;
  height: 21px;
  padding-left: 8px;
  background: #fff;
  border-bottom: 1px solid #ececec;
}

.menubar .app-icon {
  margin-right: -7px;
}

.mdi-buttons {
  display: flex;
  gap: 10px;
  margin-left: auto;
  padding-right: 4px;
}

.mdi-buttons svg {
  width: 10px;
  height: 10px;
}

/* Werkzeugkästen */
.toolbar {
  display: flex;
  align-items: center;
  height: 35px;
  padding-left: 5px;
  background: #fff;
}

.toolbar-main {
  height: 32px;
}

.toolbar button {
  justify-content: center;
  width: 27px;
  height: 27px;
}

.toolbar button svg {
  width: 18px;
  height: 18px;
}

.toolbar .on,
.selection .on {
  background: #cce6fa;
  border: 1px solid #a6d2f5;
}

.grip {
  width: 4px;
  height: 20px;
  margin-right: 6px;
  border-left: 3px dotted #444;
}

.toolbar .grip {
  border-left-width: 2px;
}

.toolbar .grip-mid {
  width: 8px;
  height: 30px;
  margin: 0 7px 0 5px;
  border-left: 2px dotted #555;
  background: #eee;
}

.sep {
  width: 1px;
  height: 25px;
  margin: 0 3px 0 4px;
  background: #8a8a8a;
}

.combo {
  display: flex;
  align-items: center;
  height: 22px;
  padding: 0 6px;
  border: 1px solid #dcdcdc;
  background: #fff;
  font-size: 12px;
}

.layer-combo {
  width: 300px;
  gap: 2px;
  margin-right: 4px;
  padding-left: 1px;
}

.layer-combo svg:not(.chev) {
  width: 17px;
  height: 17px;
}

.layer-combo select {
  padding-left: 4px;
}

.swatch {
  width: 18px;
  height: 18px;
  border: 1px solid #333;
}

.style-combo {
  width: 150px;
  margin: 0 6px 0 3px;
  padding-left: 3px;
}

.space-combo {
  width: 124px;
  margin-right: 3px;
  padding-left: 2px;
}

/* Multifunktionsleiste */
.ribbon-tabs {
  display: flex;
  height: 28px;
  padding-left: 8px;
  background: #fff;
  font-size: 13px;
}

.ribbon-tabs button {
  justify-content: center;
  min-width: 79px;
  padding: 0 7px;
}

.ribbon-tabs .active {
  background: #eee;
}

.ribbon-tabs .logo-button {
  min-width: 0;
  padding: 0;
}

.logo-button svg {
  width: 27px;
  height: 27px;
}

.ribbon {
  display: flex;
  align-items: center;
  height: 91px;
  padding-left: 2px;
  background: #eee;
  font-family: "Noto Sans", "Open Sans", sans-serif;
}

.ribbon .grip {
  margin-right: 4px;
  border-left-width: 2px;
}

.panel {
  display: flex;
  flex-direction: column;
  height: 100%;
  padding: 5px 3px 3px;
  border-right: 1px solid #dedede;
}

.panel h2 {
  margin: auto 0 0;
  font-size: 11px;
  line-height: 15px;
  text-align: center;
}

.panel-blocks { width: 236px; }
.panel-refs { width: 326px; }
.panel-pdf { width: 213px; }
.panel-images { width: 319px; }
.panel-import { width: 154px; }
.panel-data { width: 519px; }
.panel-geo { width: 96px; border-right: 0; }

.tools {
  display: flex;
  justify-content: space-evenly;
}

.big {
  flex-direction: column;
  line-height: 15px;
  text-align: center;
  white-space: nowrap;
}

.big > svg:first-child {
  width: 32px;
  height: 33px;
  margin-bottom: 1px;
}

.dgn-text {
  font: bold 15px "Open Sans", sans-serif;
  fill: #555;
}

.stack {
  display: flex;
  flex-direction: column;
  gap: 5px;
}

.stack button {
  gap: 2px;
  height: 17px;
  white-space: nowrap;
}

.stack svg:not(.caret),
.icon-grid svg {
  width: 17px;
  height: 17px;
}

.stack-right button {
  gap: 6px;
}

.icon-grid {
  display: grid;
  grid-template-columns: 17px 17px;
  gap: 5px 8px;
}

/* Zeichenbereich */
.workspace {
  display: flex;
  flex: 1;
  min-height: 0;
  background: #fff;
}

main {
  display: flex;
  flex: 1;
  flex-direction: column;
  min-width: 0;
}

.doc-tabs {
  display: flex;
  height: 20px;
  border-bottom: 2px solid #a0a0a0;
}

.doc-tab {
  display: flex;
  align-items: center;
  gap: 15px;
  padding: 0 8px 0 12px;
}

.doc-tab.active {
  padding-left: 10px;
  background: #f0f0f0;
  font-weight: bold;
}

.doc-tabs svg {
  width: 10px;
  height: 10px;
  color: #777;
}

.add {
  margin-left: 9px;
}

.canvas {
  flex: 1;
  min-height: 0;
  border-right: 2px solid #b0b0b0;
}

.drawing {
  width: 100%;
  height: 100%;
}

.drawing path {
  fill: none;
  shape-rendering: crispEdges;
}

.drawing .smooth,
.drawing .dining path {
  shape-rendering: auto;
}

.wall { stroke: #555; }
.door { stroke: #eda33c; }
.window { stroke: #8fce3a; }
.furniture { stroke: #c3bdf0; }
.dining { fill: none; stroke: #f3b9c0; }
.axis-x { stroke: #e98a98; }
.axis-y { stroke: #35c89a; }
.axis-line { stroke: #111; }
.pickbox { stroke: #111; }
.look { fill: #fcfcfc; stroke: #dedede; }
.look-dots { fill: #ccc; }

.ucs {
  font-family: "Liberation Sans", sans-serif;
  font-size: 15px;
  fill: #333;
}

.layout-tabs {
  display: flex;
  align-items: center;
  height: 18px;
  border-top: 1px solid #e4e4e4;
  border-bottom: 2px solid #999;
  border-right: 2px solid #b0b0b0;
}

.layout-tabs button {
  height: 15px;
  padding: 0 5px;
}

.layout-tabs .nav {
  width: 17px;
  padding: 0 3px;
  border-right: 1px solid #ccc;
}

.layout-tabs svg {
  width: 9px;
  height: 9px;
}

.layout-tabs .active {
  padding: 0 3px;
  background: #ececec;
  font-weight: bold;
}

/* Befehlszeile */
.command {
  display: flex;
  height: 97px;
  font-family: "DejaVu Sans Mono", monospace;
  font-size: 12px;
}

.command-side {
  display: flex;
  align-items: center;
  justify-content: center;
  width: 8px;
  background: #eee;
}

.command-side .grip {
  width: 2px;
  margin: 0;
  border-left-width: 2px;
}

.command-body {
  display: flex;
  flex: 1;
  flex-direction: column;
}

.history {
  display: flex;
  flex: 1;
  border-top: 2px solid #c8c8c8;
  background: #808080;
}

.history pre {
  flex: 1;
  margin: 0;
  padding: 9px 5px 0;
  color: #fff;
  font: inherit;
  line-height: 15px;
}

.scrollbar {
  display: flex;
  flex-direction: column;
  align-items: center;
  width: 17px;
  padding: 3px 0;
  background: #f0f0f0;
}

.scrollbar svg {
  width: 10px;
  height: 12px;
}

.thumb {
  width: 100%;
  height: 17px;
  margin: auto 0 3px;
  background: #cdcdcd;
}

.prompt {
  display: flex;
  align-items: center;
  gap: 6px;
  height: 19px;
  padding-left: 1px;
  background: #353637;
  color: #ddd;
}

.prompt input {
  flex: 1;
  padding: 0;
  border: 0;
  background: none;
  color: #ddd;
  font: italic 12px "DejaVu Sans Mono", monospace;
}

.prompt input::placeholder {
  color: #bbb;
}

/* Eigenschaften */
aside {
  display: flex;
  flex-direction: column;
  width: 328px;
}

.aside-top {
  display: flex;
  align-items: center;
  justify-content: center;
  height: 11px;
  background: #eee;
}

.aside-top::before {
  content: "";
  width: 16px;
  border-top: 2px dotted #555;
}

.aside-body {
  display: flex;
  flex: 1;
}

.properties {
  flex: 1;
  min-width: 0;
  font-family: "DejaVu Sans Condensed", "Noto Sans", sans-serif;
}

.selection {
  display: flex;
  gap: 2px;
  height: 28px;
  padding: 1px 3px 0 4px;
}

.selection .combo {
  flex: 1;
  border-color: #eee;
  padding-left: 1px;
  font-size: 11px;
}

.selection button {
  justify-content: center;
  width: 23px;
  height: 22px;
}

.selection svg:not(.chev) {
  width: 18px;
  height: 18px;
}

table {
  width: 100%;
  border-collapse: collapse;
  table-layout: fixed;
}

.col-toggle {
  width: 18px;
}

.col-name {
  width: 95px;
}

tr {
  height: 18px;
}

th, td {
  height: 18px;
  padding: 0 0 0 3px;
  overflow: hidden;
  border-bottom: 1px solid #ddd;
  font-weight: normal;
  line-height: 16px;
  text-align: left;
  white-space: nowrap;
}

td:first-child {
  padding: 0 0 0 4px;
  border-bottom: 0;
}

th {
  border-right: 1px solid #ddd;
}

.group th {
  border: 0;
  background: #d4d4d4;
  font-weight: bold;
}

td button {
  justify-content: center;
  width: 9px;
  height: 9px;
  border: 1px solid #aaa;
  color: #555;
  font-size: 9px;
}

.locked {
  color: #999;
}

.color-box {
  display: inline-block;
  width: 13px;
  height: 13px;
  margin: 0 6px 0 3px;
  border: 1px solid #222;
  vertical-align: middle;
}

.line {
  display: inline-block;
  width: 83px;
  height: 1px;
  margin: 0 6px 0 3px;
  background: #111;
  vertical-align: middle;
}

.side-tabs {
  width: 47px;
  background: #eee;
}

.side-tabs button {
  justify-content: center;
  width: 100%;
  height: 49px;
}

.side-tabs .active {
  background: #fff;
}

.side-tabs svg {
  width: 24px;
  height: 24px;
}

/* Statusleiste */
.statusbar {
  display: flex;
  align-items: center;
  height: 19px;
  padding-right: 44px;
  background: #fff;
  font-size: 10px;
}

.statusbar button {
  height: 15px;
  padding: 0 5px;
  border-left: 1px solid #e4e4e4;
}

.coords {
  margin-left: auto;
  padding-right: 5px;
}

.statusbar .off {
  color: #c8c8c8;
}

.statusbar .pressed {
  background: #c8c8c8;
}

.statusbar .more {
  border: 0;
}
```
